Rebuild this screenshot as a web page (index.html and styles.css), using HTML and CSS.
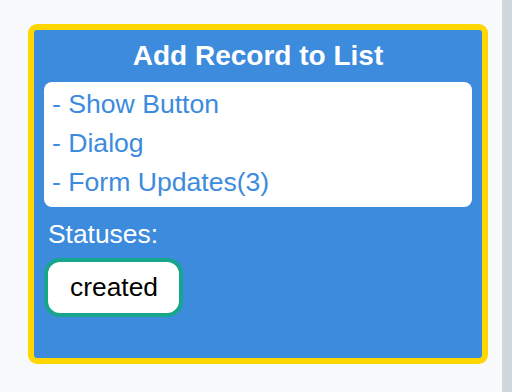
FILE: index.html
```html
<!DOCTYPE html>
<html lang="en">
<head>
<meta charset="utf-8">
<title>Add Record to List</title>
<link rel="stylesheet" href="styles.css">
</head>
<body>
<div class="page">
  <main class="main">
    <section class="card">
      <h2 class="card-title">Add Record to List</h2>
      <ul class="steps">
        <li class="step">- Show Button</li>
        <li class="step">- Dialog</li>
        <li class="step">- Form Updates(3)</li>
      </ul>
      <div class="statuses-label">Statuses:</div>
      <div class="statuses">
        <span class="badge">created</span>
      </div>
    </section>
  </main>
  <div class="scrollbar"></div>
</div>
</body>
</html>
```

FILE: styles.css
```css
html, body {
  margin: 0;
  padding: 0;
  height: 100%;
}

body {
  background: #f8f9fa;
  font-family: "Liberation Sans", Arial, sans-serif;
}

.page {
  display: flex;
  height: 392px;
}

.main {
  flex: 1;
  padding: 24px 0 0 28px;
}

.scrollbar {
  width: 10px;
  background: #cfd8dd;
}

.card {
  box-sizing: border-box;
  width: 460px;
  height: 340px;
  border: 6px solid #ffd600;
  border-radius: 9px;
  background: #3d8bdd;
  padding: 10px 10px 0 10px;
}

.card-title {
  margin: 0 0 10px 0;
  font-size: 28px;
  line-height: 32px;
  font-weight: bold;
  color: #ffffff;
  text-align: center;
}

.steps {
  list-style: none;
  margin: 0;
  padding: 3px 8px 5px 8px;
  background: #ffffff;
  border-radius: 8px;
}

.step {
  font-size: 26.6px;
  line-height: 39px;
  color: #3d8bdd;
}

.statuses-label {
  margin: 12px 0 0 4px;
  font-size: 26.4px;
  line-height: 30px;
  color: #ffffff;
}

.statuses {
  display: flex;
  margin-top: 9px;
}

.badge {
  display: inline-block;
  background: #ffffff;
  border: 4px solid #17a58b;
  border-radius: 16px;
  padding: 10px 21px 11px 22px;
  font-size: 26.4px;
  line-height: 30px;
  color: #000000;
}
```
